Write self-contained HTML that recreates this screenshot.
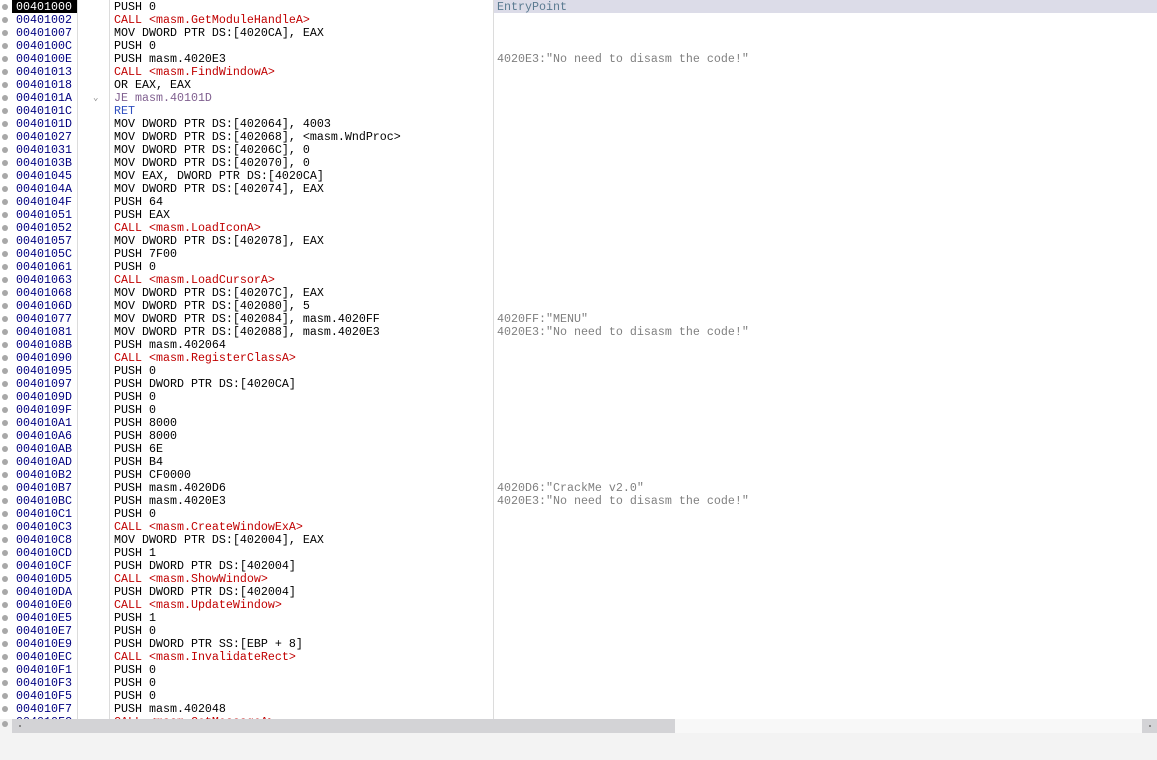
<!DOCTYPE html>
<html><head><meta charset="utf-8"><style>
html,body{margin:0;padding:0;width:1157px;height:760px;overflow:hidden;background:#fff;}
#v{position:relative;width:1157px;height:760px;font-family:"Liberation Mono",monospace;font-size:11.67px;}
.r{position:absolute;left:0;height:13px;line-height:13px;width:1157px;white-space:pre;}
.d{position:absolute;left:2px;top:4px;width:6px;height:6px;border-radius:50%;background:#a8a8a8;}
.a,.i,.c{top:1px;}
.a{position:absolute;left:16px;color:#000080;}
.i{position:absolute;left:114px;color:#000;}
.c{position:absolute;left:497px;color:#808080;}
.call{color:#c00000;}
.je{color:#806090;}
.ret{color:#3050c0;}
.vl{position:absolute;top:0;height:719px;width:1px;background:#dcdcdc;}
</style></head><body><div id="v">
<div style="position:absolute;left:493px;top:0;width:664px;height:13px;background:#dcdce8;"></div>
<div style="position:absolute;left:12px;top:0;width:65px;height:13px;background:#000;"></div>
<div class="vl" style="left:77px"></div>
<div class="vl" style="left:109px"></div>
<div class="vl" style="left:493px"></div>
<div id="rows"></div>
<div style="position:absolute;left:0;top:719px;width:1157px;height:41px;background:#f3f3f3;"></div>
<div style="position:absolute;left:12px;top:719px;width:1130px;height:14px;background:#f8f8f8;"></div>
<div style="position:absolute;left:12px;top:719px;width:663px;height:14px;background:#d3d3d6;"></div>
<div style="position:absolute;left:19px;top:725px;width:2px;height:2px;background:#888;"></div>
<div style="position:absolute;left:1142px;top:719px;width:15px;height:14px;background:#d3d3d6;"></div>
<div style="position:absolute;left:1149px;top:725px;width:2px;height:2px;background:#888;"></div>
<div style="position:absolute;left:2px;top:721px;width:6px;height:6px;border-radius:50%;background:#a8a8a8;"></div>
</div>
<script>
var D=[
["00401000","PUSH 0","","EntryPoint"],
["00401002","CALL <masm.GetModuleHandleA>","call"],
["00401007","MOV DWORD PTR DS:[4020CA], EAX"],
["0040100C","PUSH 0"],
["0040100E","PUSH masm.4020E3","",'4020E3:"No need to disasm the code!"'],
["00401013","CALL <masm.FindWindowA>","call"],
["00401018","OR EAX, EAX"],
["0040101A","JE masm.40101D","je"],
["0040101C","RET","ret"],
["0040101D","MOV DWORD PTR DS:[402064], 4003"],
["00401027","MOV DWORD PTR DS:[402068], <masm.WndProc>"],
["00401031","MOV DWORD PTR DS:[40206C], 0"],
["0040103B","MOV DWORD PTR DS:[402070], 0"],
["00401045","MOV EAX, DWORD PTR DS:[4020CA]"],
["0040104A","MOV DWORD PTR DS:[402074], EAX"],
["0040104F","PUSH 64"],
["00401051","PUSH EAX"],
["00401052","CALL <masm.LoadIconA>","call"],
["00401057","MOV DWORD PTR DS:[402078], EAX"],
["0040105C","PUSH 7F00"],
["00401061","PUSH 0"],
["00401063","CALL <masm.LoadCursorA>","call"],
["00401068","MOV DWORD PTR DS:[40207C], EAX"],
["0040106D","MOV DWORD PTR DS:[402080], 5"],
["00401077","MOV DWORD PTR DS:[402084], masm.4020FF","",'4020FF:"MENU"'],
["00401081","MOV DWORD PTR DS:[402088], masm.4020E3","",'4020E3:"No need to disasm the code!"'],
["0040108B","PUSH masm.402064"],
["00401090","CALL <masm.RegisterClassA>","call"],
["00401095","PUSH 0"],
["00401097","PUSH DWORD PTR DS:[4020CA]"],
["0040109D","PUSH 0"],
["0040109F","PUSH 0"],
["004010A1","PUSH 8000"],
["004010A6","PUSH 8000"],
["004010AB","PUSH 6E"],
["004010AD","PUSH B4"],
["004010B2","PUSH CF0000"],
["004010B7","PUSH masm.4020D6","",'4020D6:"CrackMe v2.0"'],
["004010BC","PUSH masm.4020E3","",'4020E3:"No need to disasm the code!"'],
["004010C1","PUSH 0"],
["004010C3","CALL <masm.CreateWindowExA>","call"],
["004010C8","MOV DWORD PTR DS:[402004], EAX"],
["004010CD","PUSH 1"],
["004010CF","PUSH DWORD PTR DS:[402004]"],
["004010D5","CALL <masm.ShowWindow>","call"],
["004010DA","PUSH DWORD PTR DS:[402004]"],
["004010E0","CALL <masm.UpdateWindow>","call"],
["004010E5","PUSH 1"],
["004010E7","PUSH 0"],
["004010E9","PUSH DWORD PTR SS:[EBP + 8]"],
["004010EC","CALL <masm.InvalidateRect>","call"],
["004010F1","PUSH 0"],
["004010F3","PUSH 0"],
["004010F5","PUSH 0"],
["004010F7","PUSH masm.402048"],
["004010FC","CALL <masm.GetMessageA>","call"]
];
var h="";
function e(s){return s.replace(/&/g,"&amp;").replace(/</g,"&lt;").replace(/>/g,"&gt;");}
D.forEach(function(r,k){
 var cls=r[2]||"";
 h+='<div class="r" style="top:'+(k*13)+'px"><div class="d"></div><span class="a"'+(k==0?' style="color:#fff"':'')+'>'+r[0]+'</span>';
 if(k==7)h+='<span style="position:absolute;left:93px;top:1px;color:#888;font-size:9px">&#8964;</span>';
 h+='<span class="i '+cls+'">'+e(r[1])+'</span>';
 if(r[3])h+='<span class="c"'+(k==0?' style="color:#5a7a90"':'')+'>'+e(r[3])+'</span>';
 h+='</div>';
});
document.getElementById("rows").innerHTML=h;
</script>
</body></html>
